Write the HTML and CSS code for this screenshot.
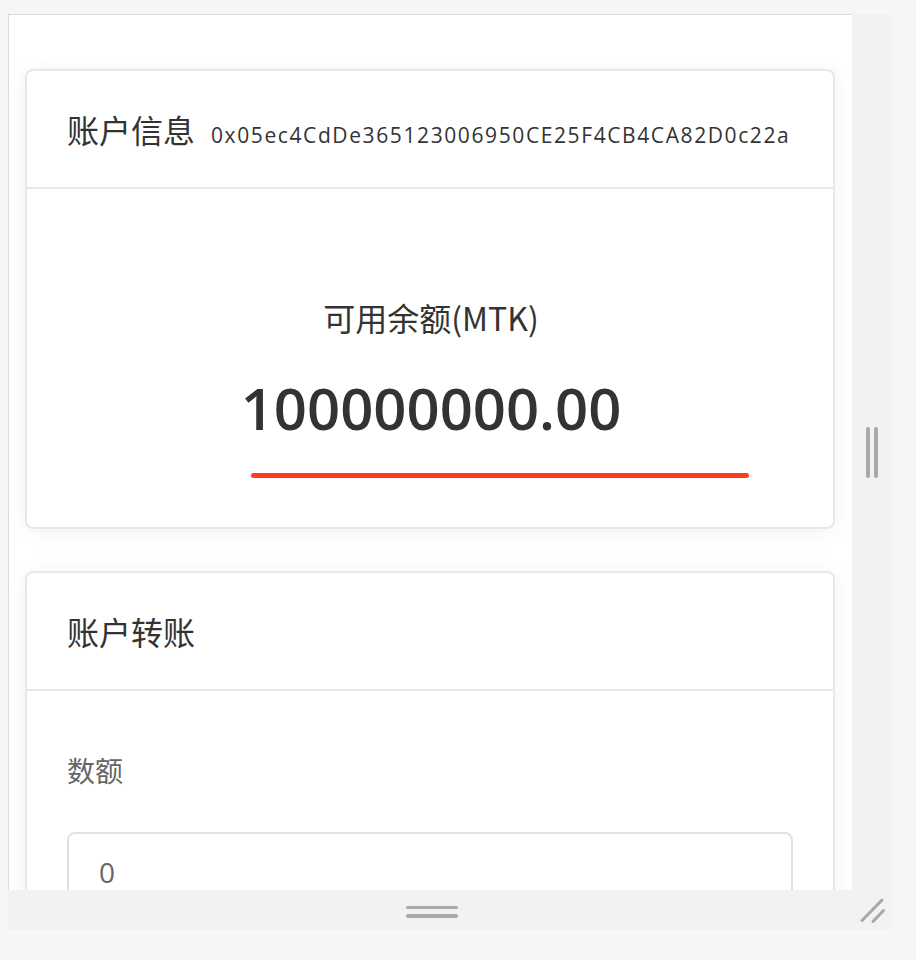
FILE: index.html
```html
<!DOCTYPE html>
<html lang="zh-CN">
<head>
<meta charset="utf-8">
<title>账户信息</title>
<link rel="stylesheet" href="styles.css">
</head>
<body>
<div class="frame">
  <div class="panel">
    <section class="card">
      <header class="card-head">
        <h2 class="card-title">账户信息</h2>
        <span class="address">0x05ec4CdDe365123006950CE25F4CB4CA82D0c22a</span>
      </header>
      <div class="balance">
        <div class="balance-label">可用余额(MTK)</div>
        <div class="balance-value">100000000.00</div>
        <div class="balance-line"></div>
      </div>
    </section>
    <section class="card">
      <header class="card-head">
        <h2 class="card-title">账户转账</h2>
      </header>
      <div class="form">
        <label class="field-label" for="amount">数额</label>
        <input class="field-input" id="amount" type="text" value="0">
      </div>
    </section>
  </div>
  <div class="side-strip">
    <span class="vbar"></span><span class="vbar"></span>
  </div>
  <div class="bottom-strip">
    <div class="hhandle"><span class="hbar"></span><span class="hbar"></span></div>
  </div>
  <div class="corner">
    <svg width="40" height="40" viewBox="0 0 40 40"><path d="M10 30.5 L30 10 M21 31.5 L31.5 20.5" stroke="#a8a8a8" stroke-width="3" stroke-linecap="round" fill="none"/></svg>
  </div>
</div>
</body>
</html>
```
FILE: styles.css
```css
* { box-sizing: border-box; }
html, body { margin: 0; padding: 0; }
body {
  background: #f5f7f6;
  padding: 14px 0 0 8px;
  font-family: "Open Sans", "Noto Sans CJK SC", sans-serif;
  color: #333;
}
.frame {
  display: grid;
  grid-template-columns: 844px 40px;
  grid-template-rows: 876px 40px;
  width: 884px;
}
.panel {
  background: #fff;
  border-top: 1px solid #d9d9d9;
  border-left: 1px solid #dcdcdc;
  overflow: hidden;
  padding: 54px 17px 0 16px;
}
.card {
  background: #fff;
  border: 2px solid #e6e8ee;
  border-radius: 8px;
  box-shadow: 0 2px 20px rgba(0, 0, 0, 0.06);
  margin-bottom: 42px;
}
.card-head {
  height: 118px;
  border-bottom: 2px solid #e6e8ee;
  display: flex;
  align-items: baseline;
  padding: 0 40px;
  line-height: 116px;
  overflow: hidden;
}
.card-title {
  margin: 0;
  flex-shrink: 0;
  white-space: nowrap;
  font-family: "Noto Sans CJK SC", sans-serif;
  font-size: 32px;
  font-weight: 400;
  color: #333;
}
.address {
  margin-left: 16px;
  font-size: 21px;
  letter-spacing: 1.6px;
  color: #333;
  white-space: nowrap;
}
.balance {
  padding: 106px 0 49px;
  display: flex;
  flex-direction: column;
}
.balance-label {
  align-self: center;
  font-family: "Noto Sans CJK SC", sans-serif;
  font-size: 32px;
  line-height: 44px;
  color: #333;
  margin-left: 2px;
}
.balance-value {
  align-self: center;
  margin-top: 34px;
  font-size: 58px;
  font-weight: 600;
  line-height: 70px;
  color: #333;
  margin-left: 2px;
}
.balance-line {
  margin: 30px 0 0 224px;
  width: 498px;
  height: 5px;
  border-radius: 3px;
  background: #fd3d1c;
}
.form {
  padding: 59px 40px 40px;
  display: flex;
  flex-direction: column;
}
.field-label {
  font-family: "Noto Sans CJK SC", sans-serif;
  font-size: 28px;
  line-height: 40px;
  color: #666;
}
.field-input {
  margin-top: 42px;
  height: 80px;
  width: 100%;
  border: 2px solid #dfe1e7;
  border-radius: 8px;
  padding: 0 30px;
  font-family: "Open Sans", sans-serif;
  font-size: 28px;
  color: #666;
  background: #fff;
  outline: none;
}
.side-strip {
  background: #f1f2f4;
  display: flex;
  align-items: center;
  justify-content: center;
  gap: 4px;
}
.vbar {
  width: 4px;
  height: 51px;
  border-radius: 2px;
  background: #a9a9a9;
}
.bottom-strip {
  background: #f1f2f4;
  display: flex;
  align-items: center;
  justify-content: center;
  padding-left: 4px;
}
.hhandle {
  display: flex;
  flex-direction: column;
  gap: 5px;
  margin-top: 3px;
}
.hbar {
  width: 52px;
  height: 3.5px;
  border-radius: 2px;
  background: #a9a9a9;
}
.corner {
  background: #f1f2f4;
}
.corner svg { display: block; }
```
